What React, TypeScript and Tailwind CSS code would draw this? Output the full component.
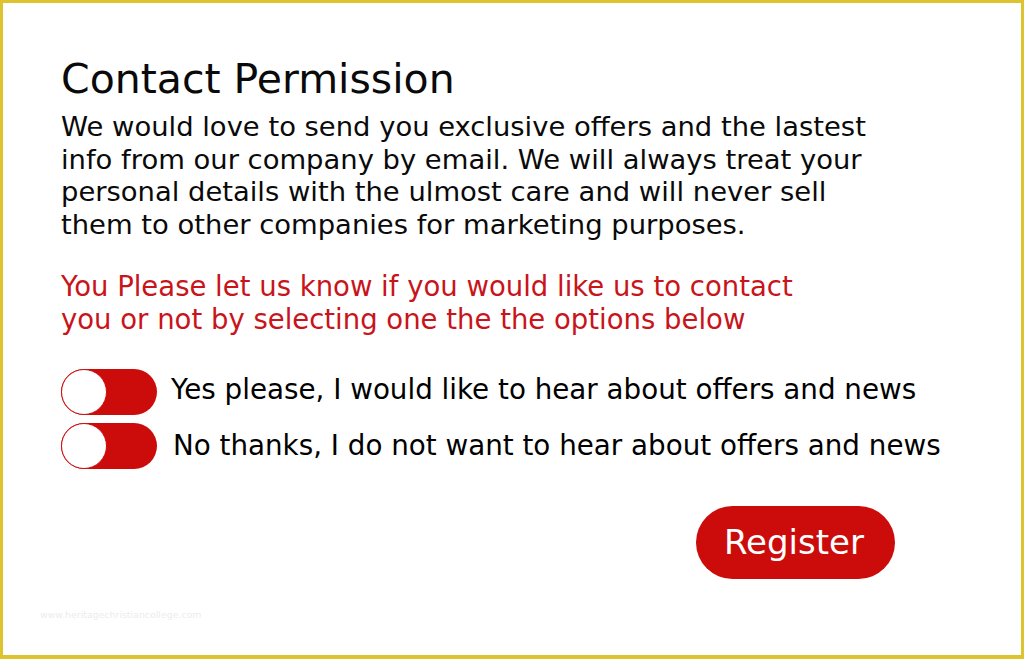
import { useState } from "react";

const font = { fontFamily: '"DejaVu Sans", Verdana, sans-serif' };

interface ToggleProps {
  label: string;
  on: boolean;
  onClick: () => void;
  textClass?: string;
}

const Toggle = ({ label, on, onClick, textClass = "" }: ToggleProps) => (
  <div className="flex items-center">
    <button
      onClick={onClick}
      className={`flex h-[46px] w-[96px] shrink-0 rounded-full bg-[#cc0b0b] ${on ? "justify-end" : "justify-start"}`}
    >
      <span className="h-[46px] w-[46px] rounded-full border border-[#cc0b0b] bg-white" />
    </button>
    <span className={`whitespace-nowrap text-[27.75px] leading-[33px] text-black ${textClass}`}>{label}</span>
  </div>
);

const App = () => {
  const [choice, setChoice] = useState<"yes" | "no" | null>(null);

  return (
    <div
      className="relative h-[659px] w-[1024px] overflow-hidden border-[3px] border-b-4 border-[#ddc42f] bg-white"
      style={font}
    >
      <div className="pl-[58px] pt-[52px]">
        <h1 className="text-[41px] font-normal leading-[48px] text-[#0a0a0a]">Contact Permission</h1>

        <p className="mt-[8px] whitespace-nowrap text-[27.4px] leading-[32.7px] text-[#0a0a0a]">
          We would love to send you exclusive offers and the lastest
          <br />
          info from our company by email. We will always treat your
          <br />
          personal details with the ulmost care and will never sell
          <br />
          them to other companies for marketing purposes.
        </p>

        <p className="mt-[28px] whitespace-nowrap text-[27.5px] leading-[33px] text-[#c8141b]">
          You Please let us know if you would like us to contact
          <br />
          you or not by selecting one the the options below
        </p>

        <div className="mt-[33px] flex flex-col gap-[8px]">
          <Toggle
            label="Yes please, I would like to hear about offers and news"
            on={choice === "yes"}
            onClick={() => setChoice("yes")}
            textClass="ml-[14px] mb-[5px]"
          />
          <Toggle
            label="No thanks, I do not want to hear about offers and news"
            on={choice === "no"}
            onClick={() => setChoice("no")}
            textClass="ml-[16px]"
          />
        </div>
      </div>

      <div className="mt-[37px] flex justify-end pr-[126px]">
        <button className="h-[73px] w-[199px] rounded-full bg-[#cc0b0b] pr-[3px] text-[34px] leading-none text-white">
          Register
        </button>
      </div>

      <span className="absolute bottom-[33px] left-[37px] text-[9.4px] text-[#ececec]">
        www.heritagechristiancollege.com
      </span>
    </div>
  );
};

export default App;
